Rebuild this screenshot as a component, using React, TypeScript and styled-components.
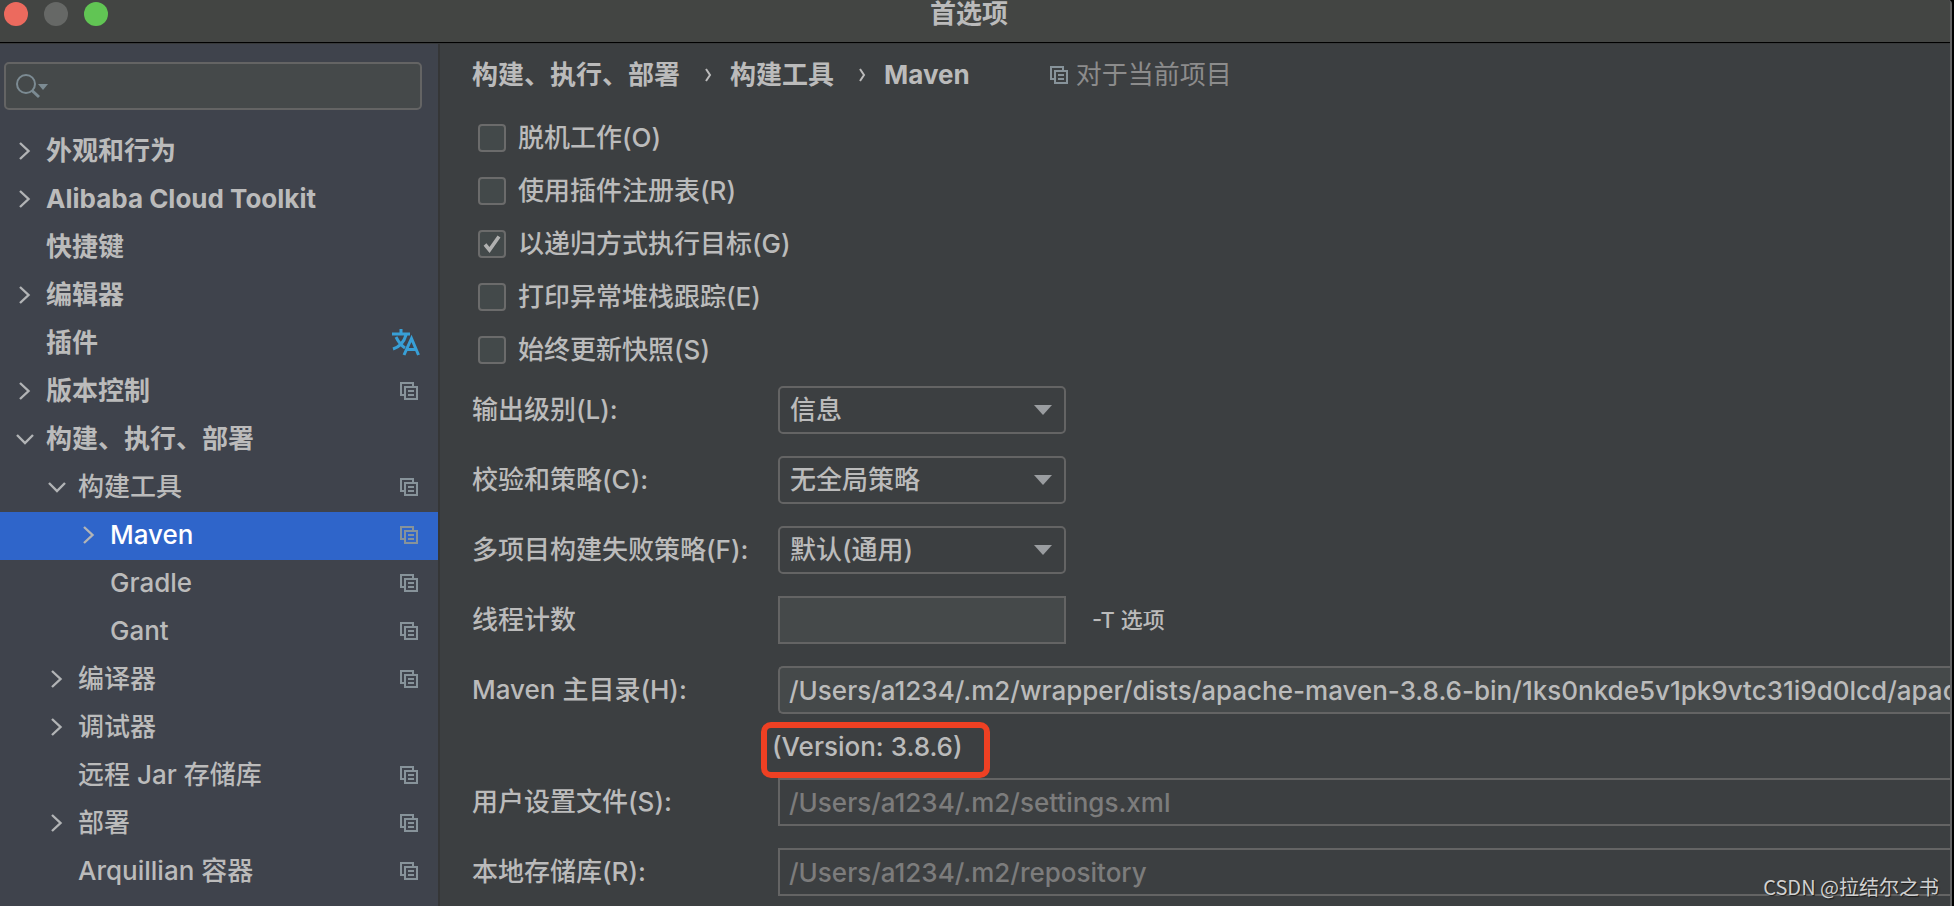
import React from "react";
import styled, { createGlobalStyle } from "styled-components";

const GlobalStyle = createGlobalStyle`
  *, *::before, *::after { box-sizing: border-box; }
  html, body, #root { height: 100%; }
  body {
    margin: 0;
    overflow: hidden;
    background: #000;
    color: #bbbbbb;
    font-family: Inter, "Noto Sans CJK SC", sans-serif;
    font-size: 26px;
    font-weight: 450;
    line-height: 32px;
  }
  button, input, select { font: inherit; color: inherit; margin: 0; }
  svg { display: block; flex: none; }
`;

const Window = styled.div`
  height: 100vh;
  margin-right: 2px;
  border-right: 2px solid #626364;
  border-top-right-radius: 4px;
  background: #3c3f41;
  display: flex;
  flex-direction: column;
  overflow: hidden;
`;

const TitleBar = styled.header`
  flex: none;
  height: 43px;
  border-bottom: 1px solid #000;
  background: #434543;
  display: grid;
  grid-template-columns: 1fr auto 1fr;
  align-items: start;
`;

const Lights = styled.div`
  display: flex;
  gap: 16px;
  padding: 2px 4px;
`;

const Light = styled.button<{ $color: string }>`
  width: 24px;
  height: 24px;
  padding: 0;
  border: 0;
  border-radius: 50%;
  background: ${(p) => p.$color};
`;

const Title = styled.h1`
  margin: 0;
  padding-right: 12px;
  font-size: 26px;
  line-height: 28px;
  font-weight: 600;
`;

const Body = styled.div`
  flex: 1;
  min-height: 0;
  display: flex;
  border-top: 1px solid #37393a;
`;

const Sidebar = styled.aside`
  flex: none;
  width: 440px;
  background: #3f434c;
  border-right: 2px solid #353637;
`;

const SearchBox = styled.label`
  margin: 18px 16px 18px 4px;
  height: 48px;
  border: 2px solid #646464;
  border-radius: 5px;
  background: #45494a;
  display: flex;
  align-items: center;
  padding: 0 10px;
  gap: 8px;
`;

const SearchInput = styled.input`
  flex: 1;
  min-width: 0;
  border: 0;
  padding: 0;
  outline: 0;
  background: transparent;
`;

const Tree = styled.ul`
  margin: 0;
  padding: 0;
  list-style: none;
`;

const TreeRow = styled.li<{ $level: number; $selected?: boolean }>`
  height: 48px;
  padding: 0 18px 2px ${(p) => 14 + p.$level * 32}px;
  display: flex;
  align-items: center;
  background: ${(p) => (p.$selected ? "#2f65ca" : "transparent")};
  color: ${(p) => (p.$selected ? "#ffffff" : "#bbbbbb")};
  font-weight: ${(p) => (p.$level === 0 ? 700 : 450)};
  font-optical-sizing: ${(p) => (p.$level === 0 ? "none" : "auto")};
`;

const ArrowSlot = styled.span`
  flex: none;
  width: 32px;
  color: #b2b4b6;
`;

const TreeLabel = styled.a`
  flex: 1;
  color: inherit;
  text-decoration: none;
  white-space: nowrap;
`;

const Main = styled.main`
  flex: 1;
  min-width: 0;
  padding: 15px 0 0 32px;
`;

const Breadcrumb = styled.nav`
  display: flex;
  align-items: center;
  height: 32px;
  margin-bottom: 31px;
  font-weight: 700;
`;

const Crumb = styled.a`
  color: inherit;
  text-decoration: none;
`;

const CrumbArrow = styled.svg`
  width: 8px;
  height: 14px;
  margin: 0 18px 0 24px;
`;

const Scope = styled.span`
  display: flex;
  align-items: center;
  gap: 6px;
  margin-left: 80px;
  color: #8c8c8c;
  font-weight: 400;
`;

const Checks = styled.div`
  display: grid;
  gap: 21px;
  padding-left: 6px;
  margin-bottom: 20px;
`;

const CheckLabel = styled.label`
  display: flex;
  align-items: center;
  gap: 12px;
`;

const CheckBox = styled.input`
  appearance: none;
  width: 28px;
  height: 28px;
  border: 2px solid #6b6b6b;
  border-radius: 4px;
  background: #43494a;
  &:checked {
    background: #43494a
      url("data:image/svg+xml,%3Csvg xmlns='http://www.w3.org/2000/svg' viewBox='0 0 24 24'%3E%3Cpath d='M5 12.5l4.5 5.5L19 4.5' fill='none' stroke='%23b0b0b0' stroke-width='3.6'/%3E%3C/svg%3E")
      center / 24px no-repeat;
  }
`;

const Form = styled.div`
  display: grid;
  grid-template-columns: 306px 1fr;
  row-gap: 22px;
`;

const FieldLabel = styled.label`
  height: 48px;
  line-height: 48px;
  white-space: nowrap;
`;

const FieldLine = styled.div`
  display: flex;
  align-items: center;
  gap: 26px;
  min-width: 0;
`;

const SelectWrap = styled.div`
  display: grid;
  width: 288px;
  align-items: center;
  > * { grid-area: 1 / 1; }
  > svg { justify-self: end; margin-right: 14px; pointer-events: none; }
`;

const Select = styled.select`
  appearance: none;
  width: 100%;
  height: 48px;
  padding: 0 40px 0 10px;
  border: 2px solid #646464;
  border-radius: 5px;
  background: #3c3f41;
`;

const TextField = styled.input<{ $short?: boolean; $rounded?: boolean }>`
  width: ${(p) => (p.$short ? "288px" : "100%")};
  height: 48px;
  padding: 0 0 0 9px;
  border: 2px solid #646464;
  border-right-width: ${(p) => (p.$short ? "2px" : "0")};
  border-radius: ${(p) => (p.$rounded ? "5px 0 0 5px" : "0")};
  background: #45494a;
  &:disabled {
    background: #3c3f41;
    color: #7c7c7c;
  }
`;

const Hint = styled.span`
  font-size: 22px;
`;

const HomeField = styled.div`
  min-width: 0;
`;

const Version = styled.output`
  display: block;
  width: 229px;
  height: 56px;
  margin: 8px 0 -22px -17px;
  padding-left: 5px;
  border: 6px solid #ee4023;
  border-radius: 10px;
  line-height: 38px;
  white-space: nowrap;
`;

const Watermark = styled.div`
  position: absolute;
  right: 15px;
  bottom: 5px;
  font-size: 20px;
  font-weight: 400;
  line-height: 28px;
  font-family: "Noto Sans CJK SC", sans-serif;
  color: #d0d0d0;
  text-shadow: 1px 1px 1px #1c1c1c;
`;

const CopyIcon = () => (
  <svg width="20" height="18" viewBox="0 0 20 18" fill="none" stroke="#87939a" strokeWidth="2" aria-hidden="true">
    <path d="M4 13H1V1h12v3" />
    <path d="M5 5h12v12H5z" />
    <path d="M8 9h6M8 13h6" />
  </svg>
);

const TranslateIcon = () => (
  <svg width="28" height="28" viewBox="0 0 28 28" fill="none" stroke="#389fd6" strokeWidth="3" aria-hidden="true">
    <path d="M0 5H18M9 0V5M4 8C7 14 10 17 13 19M14 6C12 13 7 18 1 20" />
    <path d="M12 26L19.500 9.500L26.500 26M15 20.500H24" />
  </svg>
);

const Arrow = ({ open }: { open: boolean }) => (
  <svg width="22" height="20" viewBox="0 0 22 20" fill="none" stroke="currentColor" strokeWidth="2.400" aria-hidden="true">
    <path d={open ? "M3 6l8 8 8-8" : "M6 2l8.500 8L6 18"} />
  </svg>
);

const DropArrow = () => (
  <svg width="18" height="10" viewBox="0 0 18 10" aria-hidden="true">
    <path d="M0 0h18l-9 10z" fill="#9a9da0" />
  </svg>
);

type Node = { text: string; level: number; arrow?: "open" | "closed"; icon?: "copy" | "translate"; selected?: boolean };

const nodes: Node[] = [
  { text: "外观和行为", level: 0, arrow: "closed" },
  { text: "Alibaba Cloud Toolkit", level: 0, arrow: "closed" },
  { text: "快捷键", level: 0 },
  { text: "编辑器", level: 0, arrow: "closed" },
  { text: "插件", level: 0, icon: "translate" },
  { text: "版本控制", level: 0, arrow: "closed", icon: "copy" },
  { text: "构建、执行、部署", level: 0, arrow: "open" },
  { text: "构建工具", level: 1, arrow: "open", icon: "copy" },
  { text: "Maven", level: 2, arrow: "closed", icon: "copy", selected: true },
  { text: "Gradle", level: 2, icon: "copy" },
  { text: "Gant", level: 2, icon: "copy" },
  { text: "编译器", level: 1, arrow: "closed", icon: "copy" },
  { text: "调试器", level: 1, arrow: "closed" },
  { text: "远程 Jar 存储库", level: 1, icon: "copy" },
  { text: "部署", level: 1, arrow: "closed", icon: "copy" },
  { text: "Arquillian 容器", level: 1, icon: "copy" },
];

const checks = [
  { text: "脱机工作(O)", on: false },
  { text: "使用插件注册表(R)", on: false },
  { text: "以递归方式执行目标(G)", on: true },
  { text: "打印异常堆栈跟踪(E)", on: false },
  { text: "始终更新快照(S)", on: false },
];

const selects = [
  { id: "output", label: "输出级别(L):", value: "信息" },
  { id: "checksum", label: "校验和策略(C):", value: "无全局策略" },
  { id: "fail", label: "多项目构建失败策略(F):", value: "默认(通用)" },
];

const CrumbSep = () => (
  <CrumbArrow viewBox="0 0 8 14" fill="none" stroke="currentColor" strokeWidth="2" aria-hidden="true">
    <path d="M2 1l4 6-4 6" />
  </CrumbArrow>
);

export default function App() {
  return (
    <>
      <GlobalStyle />
      <Window>
        <TitleBar>
          <Lights>
            <Light $color="#ec6a5e" aria-label="关闭" />
            <Light $color="#666866" aria-label="最小化" />
            <Light $color="#61c554" aria-label="缩放" />
          </Lights>
          <Title>首选项</Title>
        </TitleBar>
        <Body>
          <Sidebar>
            <SearchBox>
              <svg width="34" height="26" viewBox="0 0 34 26" fill="none" stroke="#7c8b93" aria-hidden="true">
                <circle cx="10" cy="11" r="9" strokeWidth="2" />
                <path d="M16 17.500l7 6.500" strokeWidth="3" />
                <path d="M22 11h10l-5 6z" fill="#7c8b93" stroke="none" />
              </svg>
              <SearchInput type="text" aria-label="搜索" />
            </SearchBox>
            <Tree>
              {nodes.map((n) => (
                <TreeRow key={n.text} $level={n.level} $selected={n.selected}>
                  <ArrowSlot>{n.arrow && <Arrow open={n.arrow === "open"} />}</ArrowSlot>
                  <TreeLabel href="#">{n.text}</TreeLabel>
                  {n.icon === "copy" && <CopyIcon />}
                  {n.icon === "translate" && <TranslateIcon />}
                </TreeRow>
              ))}
            </Tree>
          </Sidebar>
          <Main>
            <Breadcrumb>
              <Crumb href="#">构建、执行、部署</Crumb>
              <CrumbSep />
              <Crumb href="#">构建工具</Crumb>
              <CrumbSep />
              <Crumb href="#">Maven</Crumb>
              <Scope>
                <CopyIcon />
                对于当前项目
              </Scope>
            </Breadcrumb>
            <Checks>
              {checks.map((c) => (
                <CheckLabel key={c.text}>
                  <CheckBox type="checkbox" defaultChecked={c.on} />
                  {c.text}
                </CheckLabel>
              ))}
            </Checks>
            <Form>
              {selects.map((s) => (
                <React.Fragment key={s.id}>
                  <FieldLabel htmlFor={s.id}>{s.label}</FieldLabel>
                  <SelectWrap>
                    <Select id={s.id}>
                      <option>{s.value}</option>
                    </Select>
                    <DropArrow />
                  </SelectWrap>
                </React.Fragment>
              ))}
              <FieldLabel htmlFor="threads">线程计数</FieldLabel>
              <FieldLine>
                <TextField id="threads" type="text" $short />
                <Hint>-T 选项</Hint>
              </FieldLine>
              <FieldLabel htmlFor="home">Maven 主目录(H):</FieldLabel>
              <HomeField>
                <TextField
                  id="home"
                  type="text"
                  $rounded
                  defaultValue="/Users/a1234/.m2/wrapper/dists/apache-maven-3.8.6-bin/1ks0nkde5v1pk9vtc31i9d0lcd/apac"
                />
                <Version htmlFor="home">(Version: 3.8.6)</Version>
              </HomeField>
              <FieldLabel htmlFor="settings">用户设置文件(S):</FieldLabel>
              <TextField id="settings" type="text" disabled defaultValue="/Users/a1234/.m2/settings.xml" />
              <FieldLabel htmlFor="repo">本地存储库(R):</FieldLabel>
              <TextField id="repo" type="text" disabled defaultValue="/Users/a1234/.m2/repository" />
            </Form>
          </Main>
        </Body>
      </Window>
      <Watermark>CSDN @拉结尔之书</Watermark>
    </>
  );
}
